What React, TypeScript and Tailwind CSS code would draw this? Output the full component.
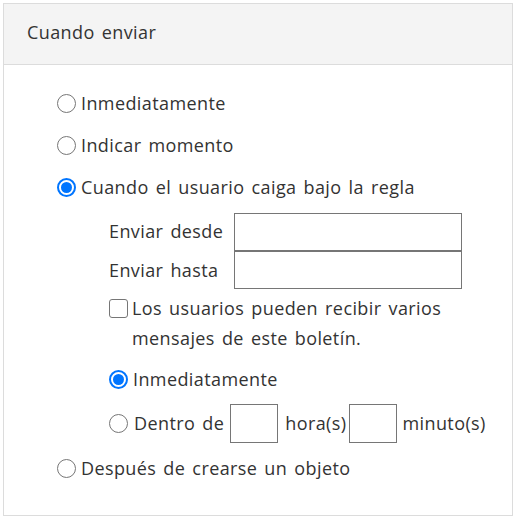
import { ReactNode } from "react"

function Radio({ on }: { on?: boolean }) {
    if (on) {
        return (
            <span className="w-[19px] h-[19px] shrink-0 rounded-full border-2 border-[#0075ff] flex items-center justify-center bg-white">
                <span className="w-[11px] h-[11px] rounded-full bg-[#0075ff]" />
            </span>
        )
    }
    return <span className="w-[19px] h-[19px] shrink-0 rounded-full border border-[#767676] bg-white" />
}

function Option({ on, children, className = "" }: { on?: boolean; children: ReactNode; className?: string }) {
    return (
        <div className={`flex items-center h-[42px] ${className}`}>
            <Radio on={on} />
            <span className="ml-[5px]">{children}</span>
        </div>
    )
}

export default function App() {
    return (
        <div className="w-[516px] h-[517px] bg-white pt-[3px] px-[3px] font-['Open_Sans',sans-serif] text-[18px] tracking-[0.4px] [word-spacing:2px] text-[#333]">
            <div className="h-[513px] border border-[#dcdcdc] flex flex-col">
                <div className="h-[61px] bg-[#f4f4f4] border-b border-[#dcdcdc] flex items-center pl-[23px] pb-[3px]">
                    Cuando enviar
                </div>
                <div className="pt-[17px] pl-[53px] flex flex-col">
                    <Option>Inmediatamente</Option>
                    <Option>Indicar momento</Option>
                    <Option on>Cuando el usuario caiga bajo la regla</Option>
                    <div className="pl-[52px] pt-[4px] flex flex-col">
                        <div className="flex items-center h-[39px]">
                            <span className="w-[125px]">Enviar desde</span>
                            <input className="w-[228px] h-[38px] border border-[#767676] outline-none" />
                        </div>
                        <div className="flex items-start h-[39px]">
                            <span className="w-[125px] h-[38px] flex items-center">Enviar hasta</span>
                            <input className="w-[228px] h-[38px] border border-[#767676] outline-none" />
                        </div>
                        <div className="flex items-start mt-[3px] leading-[30px]">
                            <span className="mt-[6px] w-[19px] h-[19px] shrink-0 rounded-[3px] border border-[#767676] bg-white" />
                            <span className="ml-[4px] w-[345px]">Los usuarios pueden recibir varios mensajes de este boletín.</span>
                        </div>
                        <Option on className="mt-[5px]">Inmediatamente</Option>
                        <div className="flex items-center h-[47px]">
                            <Radio />
                            <span className="ml-[6px]">Dentro de</span>
                            <input className="ml-[6px] w-[48px] h-[39px] border border-[#767676] outline-none" />
                            <span className="ml-[7px]">hora(s)</span>
                            <input className="ml-[3px] w-[48px] h-[39px] border border-[#767676] outline-none" />
                            <span className="ml-[5px]">minuto(s)</span>
                        </div>
                    </div>
                    <Option>Después de crearse un objeto</Option>
                </div>
            </div>
        </div>
    )
}
